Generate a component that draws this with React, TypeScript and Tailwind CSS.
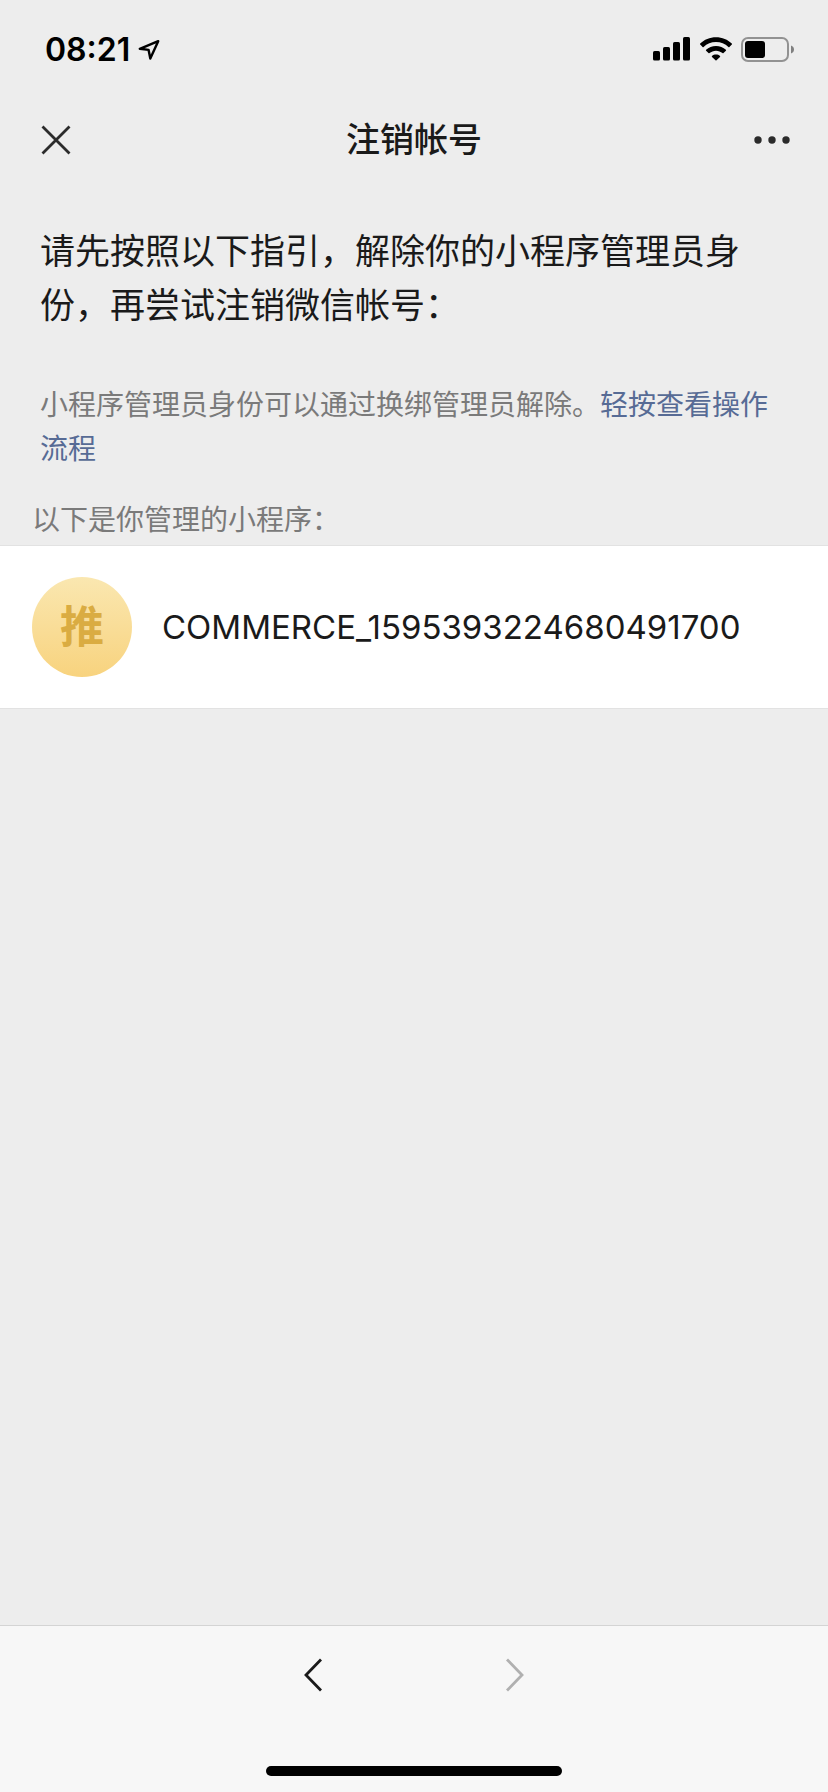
const miniPrograms = [{ badge: "推", name: "COMMERCE_1595393224680491700" }];

function LocationIcon() {
  return (
    <svg width="22" height="22" viewBox="0 0 22 22" fill="none" aria-hidden="true">
      <path
        d="M20.2 2.2 L1.8 9.8 L10.6 10.9 L12.3 19.6 Z"
        stroke="#000"
        strokeWidth="2.4"
        strokeLinejoin="round"
      />
    </svg>
  );
}

function SignalIcon() {
  return (
    <svg width="38" height="24" viewBox="0 0 38 24" aria-hidden="true">
      <rect x="0" y="14" width="7" height="9.5" rx="1.6" />
      <rect x="10" y="10" width="7" height="13.5" rx="1.6" />
      <rect x="20" y="5" width="7" height="18.5" rx="1.6" />
      <rect x="30" y="0" width="7" height="23.5" rx="1.6" />
    </svg>
  );
}

function WifiIcon() {
  return (
    <svg width="32" height="24" viewBox="0 0 32 24" aria-hidden="true">
      <path d="M16 0.2 C22.2 0.2 27.8 2.6 31.8 6.6 C32.1 6.9 32.1 7.3 31.8 7.6 L29.4 9.9 C29.1 10.2 28.7 10.2 28.4 9.9 C25.1 6.7 20.8 4.9 16 4.9 C11.2 4.9 6.9 6.7 3.6 9.9 C3.3 10.2 2.9 10.2 2.6 9.9 L0.2 7.6 C-0.1 7.3 -0.1 6.9 0.2 6.6 C4.2 2.6 9.8 0.2 16 0.2 Z" />
      <path d="M16 9 C19.8 9 23.3 10.4 25.9 12.8 C26.2 13.1 26.2 13.5 25.9 13.8 L23.5 16.1 C23.2 16.4 22.8 16.4 22.5 16.1 C20.7 14.6 18.5 13.7 16 13.7 C13.5 13.7 11.3 14.6 9.5 16.1 C9.2 16.4 8.8 16.4 8.5 16.1 L6.1 13.8 C5.8 13.5 5.8 13.1 6.1 12.8 C8.7 10.4 12.2 9 16 9 Z" />
      <path d="M16 17.5 C17.5 17.5 18.9 18 20 18.9 C20.3 19.2 20.3 19.6 20 19.9 L16.5 23.3 C16.2 23.6 15.8 23.6 15.5 23.3 L12 19.9 C11.7 19.6 11.7 19.2 12 18.9 C13.1 18 14.5 17.5 16 17.5 Z" />
    </svg>
  );
}

function BatteryIcon() {
  return (
    <svg width="53" height="25" viewBox="0 0 53 25" aria-hidden="true">
      <rect x="1" y="1" width="46" height="23" rx="6" fill="none" stroke="#929292" strokeWidth="2" />
      <path d="M50 8.5 C52 9.2 53 10.7 53 12.5 C53 14.3 52 15.8 50 16.5 Z" fill="#808080" />
      <rect x="4" y="4" width="20" height="17" rx="3" />
    </svg>
  );
}

export default function App() {
  return (
    <div className="flex min-h-screen flex-col bg-[#ededed] font-['Inter','Noto_Sans_CJK_SC',sans-serif] text-[#1a1a1a]">
      {/* Status bar */}
      <div className="flex h-[98px] items-center justify-between pr-[34px] pl-[45px] text-black">
        <div className="flex items-center gap-2 pt-px">
          <span className="text-[32px] leading-10 font-semibold">08:21</span>
          <LocationIcon />
        </div>
        <div className="flex items-center gap-[9px]">
          <SignalIcon />
          <WifiIcon />
          <BatteryIcon />
        </div>
      </div>

      {/* Title bar */}
      <header className="flex h-[84px] items-center justify-between px-8">
        <button type="button" aria-label="关闭" className="flex w-12 items-center justify-center py-2">
          <svg width="32" height="32" viewBox="0 0 32 32" stroke="#2b2b2b" strokeWidth="2.8" strokeLinecap="butt">
            <path d="M2.5 2.5 L29.5 29.5 M29.5 2.5 L2.5 29.5" />
          </svg>
        </button>
        <h1 className="text-[34px] leading-12 font-medium">注销帐号</h1>
        <button type="button" aria-label="更多" className="flex w-12 items-center justify-center py-2">
          <svg width="36" height="8" viewBox="0 0 36 8" fill="#2b2b2b">
            <circle cx="4" cy="4" r="3.7" />
            <circle cx="18" cy="4" r="3.7" />
            <circle cx="32" cy="4" r="3.7" />
          </svg>
        </button>
      </header>

      <main className="flex-1 pt-[42px]">
        <section className="px-10">
          <p className="text-[35px] leading-[54px]">
            请先按照以下指引，解除你的小程序管理员身份，再尝试注销微信帐号：
          </p>
          <p className="mt-[51px] text-[28px] leading-[44px] text-[#7a7a7a]">
            小程序管理员身份可以通过换绑管理员解除。
            <a href="#guide" className="text-[#576b95]">
              轻按查看操作流程
            </a>
          </p>
        </section>

        <section className="mt-[27px]">
          <h2 className="px-8 pb-[3px] text-[28px] leading-[44px] text-[#7a7a7a]">以下是你管理的小程序：</h2>
          <ul className="border-y border-[#e2e2e2] bg-white">
            {miniPrograms.map((item) => (
              <li key={item.name} className="flex items-center gap-[30px] px-8 py-[31px]">
                <span className="flex size-[100px] shrink-0 items-center justify-center rounded-full bg-linear-to-b from-[#fae7b0] to-[#f8d37e] text-[44px] leading-none font-bold text-[#daac42]">
                  {item.badge}
                </span>
                <span className="text-[33px] leading-12">{item.name}</span>
              </li>
            ))}
          </ul>
        </section>
      </main>

      {/* Browser navigation */}
      <footer className="border-t border-[#d4d4d4] bg-[#f7f7f7] pb-4">
        <nav className="flex h-[98px] items-center justify-center gap-[154px]">
          <button type="button" aria-label="后退" className="flex h-12 w-12 items-center justify-center">
            <svg width="18" height="34" viewBox="0 0 18 34" fill="none" stroke="#1a1a1a" strokeWidth="2.8">
              <path d="M17 1.5 L2 17 L17 32.5" />
            </svg>
          </button>
          <button type="button" aria-label="前进" disabled className="flex h-12 w-12 items-center justify-center">
            <svg width="18" height="34" viewBox="0 0 18 34" fill="none" stroke="#b0b0b0" strokeWidth="2.8">
              <path d="M1 1.5 L16 17 L1 32.5" />
            </svg>
          </button>
        </nav>
        <div className="mx-auto mt-[42px] h-[10px] w-[296px] rounded-full bg-black" />
      </footer>
    </div>
  );
}
